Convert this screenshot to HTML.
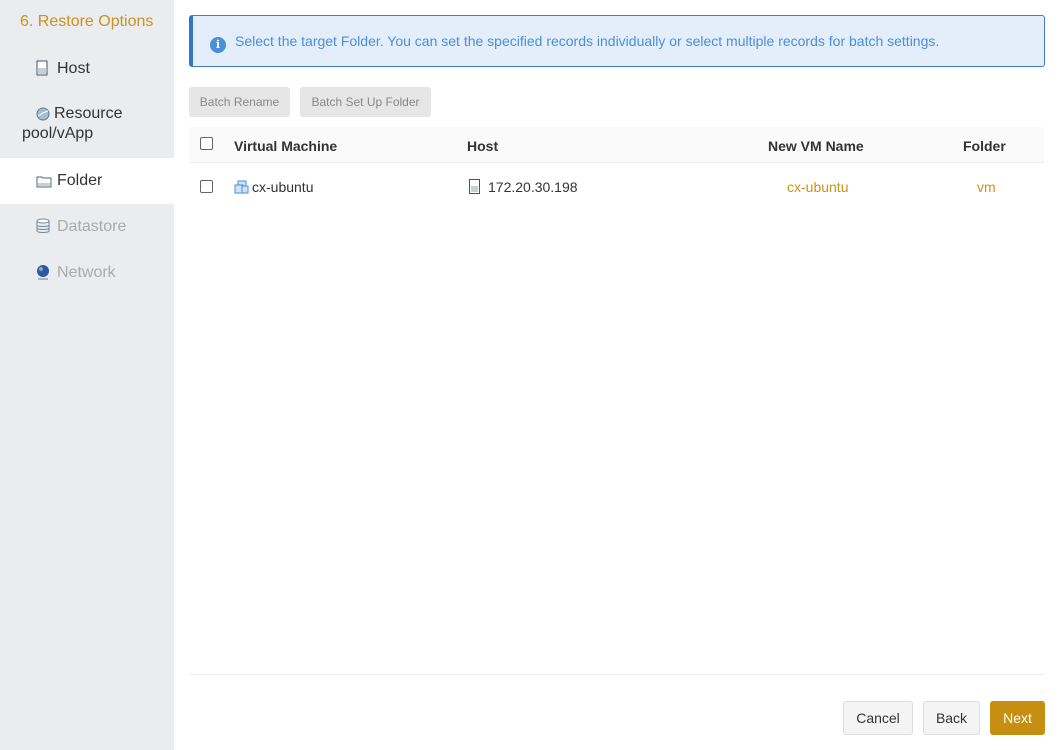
<!DOCTYPE html>
<html><head><meta charset="utf-8"><style>
*{box-sizing:border-box;margin:0;padding:0}
body{width:1060px;height:750px;font-family:"Liberation Sans",sans-serif;background:#fff;position:relative;overflow:hidden;color:#333}
.side{position:absolute;left:0;top:0;width:174px;height:750px;background:#ebecf0}
.side .t{position:absolute;left:20px;top:13px;font-size:16px;color:#c8941b}
.it{position:absolute;left:0;width:174px;font-size:16px;color:#333;padding-left:36px}
.it svg{vertical-align:-3px}
.sel{background:#fff}
.dis{color:#aaa}
.info{position:absolute;left:189px;top:15px;width:856px;height:52px;background:#e3eefa;border:1px solid #3f7fc6;border-left:4px solid #3576c0;border-radius:3px;font-size:14px;color:#4a8fd8;padding:17px 0 0 17px}
.info .i{display:inline-block;width:16px;height:16px;border-radius:50%;background:#4a8fd8;color:#fff;font-size:11px;font-weight:bold;text-align:center;line-height:16px;margin-right:9px;vertical-align:-2px;font-family:"DejaVu Serif",serif}
.btn{position:absolute;top:87px;height:30px;background:#e6e6e6;border-radius:3px;font-size:12px;color:#888;line-height:30px;text-align:center}
.thead{position:absolute;left:189px;top:127px;width:855px;height:36px;background:#fafafa;border-bottom:1px solid #eee}
.cell{position:absolute;font-size:14px}
.th{font-weight:bold;color:#333}
.cb{position:absolute;width:13px;height:13px;border:1px solid #666;border-radius:2px;background:#fff}
.gold{color:#c8941b}
.line{position:absolute;left:189px;top:674px;width:855px;height:1px;background:#eee}
.fb{position:absolute;top:701px;height:34px;border:1px solid #ddd;background:#f4f4f4;border-radius:3px;font-size:14px;line-height:32px;text-align:center;color:#333}
</style></head><body>
<div class="side">
<div class="t">6. Restore Options</div>
<div class="it" style="top:58px;height:40px;line-height:22px"><svg width="12" height="16" style="margin-right:9px"><rect x="1" y="1" width="10" height="14" fill="#fff" stroke="#456" stroke-width="1"/><rect x="2" y="8" width="8" height="6" fill="#c5cfd8"/></svg>Host</div>
<div class="it" style="top:104px;padding-left:36px;line-height:20px"><svg width="14" height="14" style="margin-right:4px"><circle cx="7" cy="7" r="6" fill="#a9bdd0" stroke="#607890"/><path d="M2 9 L7 6 L12 4" stroke="#fff" fill="none"/></svg>Resource<br><span style="margin-left:-14px">pool/vApp</span></div>
<div class="it sel" style="top:158px;height:46px;line-height:46px"><svg width="16" height="13" style="margin-right:5px"><path d="M1 2h5l1 1h8v9H1z" fill="#fff" stroke="#567"/><rect x="2" y="8" width="12" height="3" fill="#c5cfd8"/></svg>Folder</div>
<div class="it dis" style="top:217px;line-height:20px"><svg width="14" height="16" style="margin-right:7px"><ellipse cx="7" cy="3" rx="6" ry="2" fill="#fff" stroke="#789"/><path d="M1 3v10c0 2 12 2 12 0V3M1 7c0 2 12 2 12 0M1 10c0 2 12 2 12 0" fill="none" stroke="#789"/></svg>Datastore</div>
<div class="it dis" style="top:263px;line-height:20px"><svg width="14" height="16" style="margin-right:7px"><circle cx="7" cy="7" r="6" fill="#2d58a8"/><circle cx="5" cy="5" r="2" fill="#8ab"/><path d="M2 15h10" stroke="#777"/></svg>Network</div>
</div>
<div class="info"><span class="i">i</span>Select the target Folder. You can set the specified records individually or select multiple records for batch settings.</div>
<div class="btn" style="left:189px;width:101px">Batch Rename</div>
<div class="btn" style="left:300px;width:131px">Batch Set Up Folder</div>
<div class="thead"></div>
<div class="cb" style="left:200px;top:137px"></div>
<div class="cell th" style="left:234px;top:138px">Virtual Machine</div>
<div class="cell th" style="left:467px;top:138px">Host</div>
<div class="cell th" style="left:768px;top:138px">New VM Name</div>
<div class="cell th" style="left:963px;top:138px">Folder</div>
<div class="cb" style="left:200px;top:180px"></div>
<div class="cell" style="left:234px;top:179px"><svg width="15" height="14" style="vertical-align:-2px;margin-right:3px"><rect x="4" y="1" width="8" height="7" fill="#cfe3f7" stroke="#4a8fd8"/><rect x="1" y="5" width="8" height="8" fill="#cfe3f7" stroke="#4a8fd8"/><rect x="8" y="6" width="6" height="7" fill="#cfe3f7" stroke="#4a8fd8"/></svg>cx-ubuntu</div>
<div class="cell" style="left:469px;top:179px"><svg width="11" height="15" style="vertical-align:-2px;margin-right:8px"><rect x="0.5" y="0.5" width="10" height="14" fill="#fff" stroke="#456"/><rect x="2" y="7" width="7" height="6" fill="#c5cfd8"/></svg>172.20.30.198</div>
<div class="cell gold" style="left:787px;top:179px">cx-ubuntu</div>
<div class="cell gold" style="left:977px;top:179px">vm</div>
<div class="line"></div>
<div class="fb" style="left:843px;width:70px">Cancel</div>
<div class="fb" style="left:923px;width:57px">Back</div>
<div class="fb" style="left:990px;width:55px;background:#c68f12;border-color:#c68f12;color:#fff">Next</div>
</body></html>
